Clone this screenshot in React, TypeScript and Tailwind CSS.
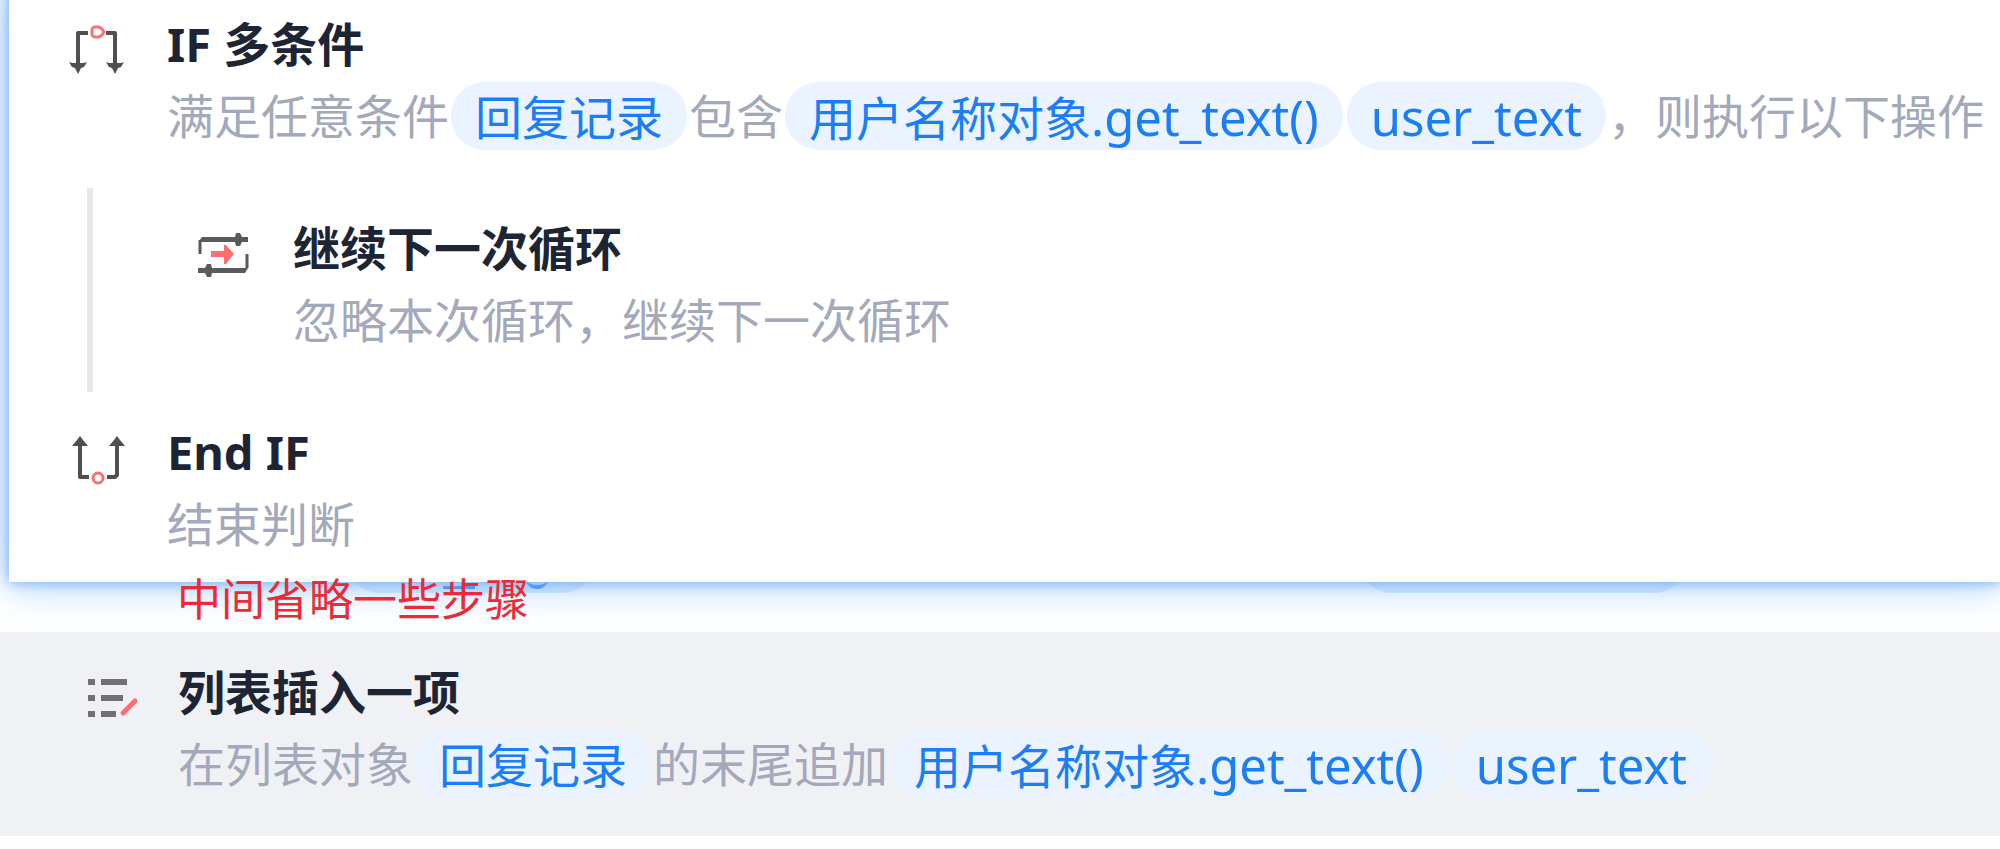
import React from 'react';

const Pill: React.FC<{ children: React.ReactNode }> = ({ children }) => (
  <span className="mx-0.5 flex h-[68px] items-baseline rounded-full bg-[#eaf3ff] pt-px pr-6 pl-6 text-[#1a7ef5]">{children}</span>
);

// Latin code names run slightly larger than the Chinese text beside them
const Code: React.FC<{ children: React.ReactNode }> = ({ children }) => (
  <span className="text-[49px]">{children}</span>
);

interface StepProps {
  icon: React.ReactNode;
  title: string;
  children: React.ReactNode;
}

/** One instruction of the flow: icon, bold title and a grey description line */
const Step: React.FC<StepProps> = ({ icon, title, children }) => (
  <div className="flex gap-9 pt-6">
    <div className="w-16 shrink-0 pt-4">{icon}</div>
    <div>
      <h2 className="mb-0.5 text-[47px] leading-[72px] font-bold whitespace-nowrap text-[#1d2433]">{title}</h2>
      <div className="flex h-[68px] items-center text-[47px] leading-[68px] whitespace-nowrap text-[#a3a9ba]">{children}</div>
    </div>
  </div>
);

const IfIcon = () => (
  <svg viewBox="0 0 64 56" className="h-14 w-16" fill="none">
    <path d="M21 9H11v32M39 9h9v32" stroke="#505050" strokeWidth="4" strokeLinejoin="round" />
    <path d="M2 38l3 1h12l3-1-3 5-3 1-3 6-3-6-3-1zM39 38l3 1h12l3-1-3 5-3 1-3 6-3-6-3-1z" fill="#505050" />
    <path d="M27 3h5l3 2 2 3-2 3-3 2h-5l-2-2V5z" stroke="#fb6f73" strokeWidth="3" strokeLinejoin="round" />
  </svg>
);

const EndIfIcon = () => (
  <svg viewBox="0 0 64 56" className="h-14 w-16" fill="none">
    <path d="M13 12v33h9M50 12v31l-2 2h-8" stroke="#505050" strokeWidth="4" strokeLinejoin="round" />
    <path d="M5 14l5-6 3-4 3 4 5 6zM42 14l5-6 3-4 3 4 5 6z" fill="#505050" />
    <circle cx="31" cy="46" r="5" stroke="#fb6f73" strokeWidth="3" />
  </svg>
);

const ContinueIcon = () => (
  <svg viewBox="0 0 64 56" className="h-14 w-16" fill="none">
    <path d="M7 26V12M54 26v14" stroke="#5a5a5a" strokeWidth="3" />
    <path d="M6 13l3-4h33l1-4h4l2 4h6v5h-6l-2 4h-4l-1-4H8z" fill="#5a5a5a" />
    <path d="M55 40l-3 5H19l-1 4h-4l-2-4H5v-5h7l2-4h4l1 4h34z" fill="#5a5a5a" />
    <path d="M18 23h13v-6h2l8 9-8 10h-2v-7H18z" fill="#fd6e70" />
  </svg>
);

const ListIcon = () => (
  <svg viewBox="0 0 64 56" className="h-14 w-16" fill="none">
    <path d="M10 10h7M23 10h26M10 26h7M23 26h22M10 42h7M23 42h15" stroke="#707073" strokeWidth="6" />
    <path d="M45 41l12-12" stroke="#fb6f73" strokeWidth="5" strokeLinecap="round" />
  </svg>
);

const App: React.FC = () => {
  return (
    <main className="overflow-hidden bg-white font-['Noto_Sans','Noto_Sans_CJK_SC',sans-serif]">
      {/* Dragged block, lifted above the list */}
      <section className="relative z-10 -mt-4 ml-[9px] bg-white pb-6 pl-[58px] shadow-[0_0_12px_#70aff6,0_0_40px_#98c6fa]">
        <Step icon={<IfIcon />} title="IF 多条件">
          满足任意条件
          <Pill>回复记录</Pill>
          包含
          <Pill>用户名称对象<Code>.get_text()</Code></Pill>
          <Pill><Code>user_text</Code></Pill>
          ，则执行以下操作
        </Step>
        <div className="mt-[38px] ml-5 border-l-[6px] border-[#e8e8e8] pb-[38px] pl-[100px]">
          <Step icon={<ContinueIcon />} title="继续下一次循环">忽略本次循环，继续下一次循环</Step>
        </div>
        <Step icon={<EndIfIcon />} title="End IF">结束判断</Step>
      </section>

      <div className="relative h-[50px]">
        {/* Lower edges of the row that the dragged block covers */}
        <div className="absolute -top-[57px] left-0 flex w-full pl-[346px]" aria-hidden="true">
          <span className="flex h-[68px] w-[250px] items-end rounded-full bg-[#d9e9fe] pl-[97px]">
            <span className="mb-1 h-[3px] w-8 bg-[#1a6ef0]" />
            <span className="mb-1 ml-[50px] h-5 w-6 rounded-b-full border-b-4 border-[#1a6ef0]" />
          </span>
          <span className="ml-[762px] h-[68px] w-[330px] rounded-full bg-[#d9e9fe]" />
        </div>
        <p className="relative z-20 pl-[177px] text-[44px] leading-[34px] text-[#eb2a35]">中间省略一些步骤</p>
      </div>

      <section className="relative z-10 bg-[#f0f1f5] pb-[38px] pl-[78px]">
        <Step icon={<ListIcon />} title="列表插入一项">
          在列表对象
          <Pill>回复记录</Pill>
          的末尾追加
          <Pill>用户名称对象<Code>.get_text()</Code></Pill>
          <Pill><Code>user_text</Code></Pill>
        </Step>
      </section>
    </main>
  );
};

export default App;
